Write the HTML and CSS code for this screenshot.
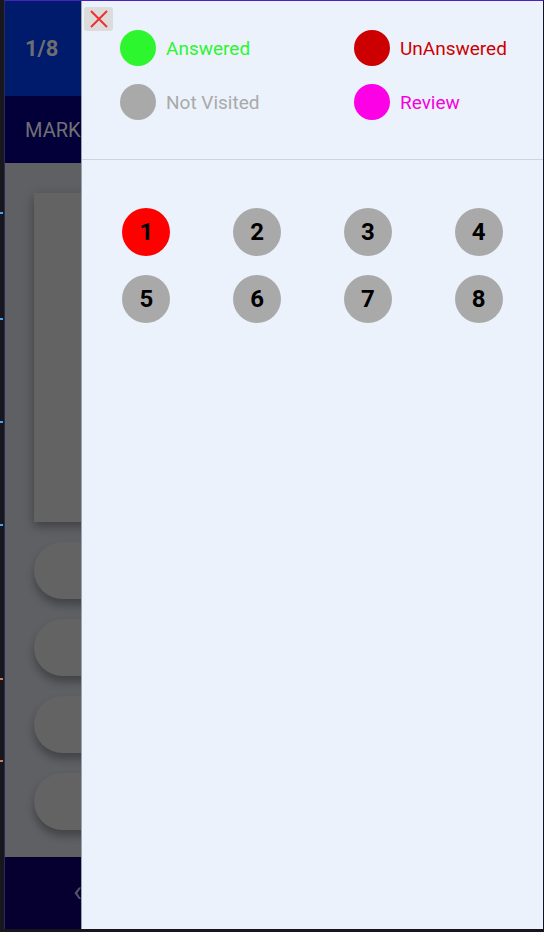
FILE: index.html
```html
<!DOCTYPE html>
<html>
<head>
<meta charset="utf-8">
<link rel="stylesheet" href="styles.css">
</head>
<body>
<div class="screen">
  <div class="gutter">
    <span class="mk m1"></span><span class="mk m2"></span><span class="mk m3"></span>
    <span class="mk m4"></span><span class="mk m5"></span><span class="mk m6"></span>
  </div>
  <div class="frame">
    <div class="app">
      <div class="hdr"><span class="count">1/8</span></div>
      <div class="subhdr"><span class="mark">MARK FOR REVIEW</span></div>
      <div class="content">
        <div class="card"></div>
        <div class="pill"></div>
        <div class="pill"></div>
        <div class="pill"></div>
        <div class="pill"></div>
      </div>
      <div class="footer"><span class="chev">&#8249;</span></div>

      <aside class="drawer">
        <button class="close" aria-label="close">
          <svg width="20" height="18" viewBox="0 0 20 18"><path d="M2 1 L18 17 M18 1 L2 17" stroke="#f0302f" stroke-width="2" fill="none"/></svg>
        </button>
        <div class="legend">
          <div class="item"><span class="dot green"></span><span class="lbl t-green">Answered</span></div>
          <div class="item"><span class="dot red"></span><span class="lbl t-red">UnAnswered</span></div>
          <div class="item"><span class="dot gray"></span><span class="lbl t-gray">Not Visited</span></div>
          <div class="item"><span class="dot pink"></span><span class="lbl t-pink">Review</span></div>
        </div>
        <div class="divider"></div>
        <div class="grid">
          <div class="cell"><span class="num cur">1</span></div>
          <div class="cell"><span class="num">2</span></div>
          <div class="cell"><span class="num">3</span></div>
          <div class="cell"><span class="num">4</span></div>
          <div class="cell"><span class="num">5</span></div>
          <div class="cell"><span class="num">6</span></div>
          <div class="cell"><span class="num">7</span></div>
          <div class="cell"><span class="num">8</span></div>
        </div>
      </aside>
    </div>
  </div>
</div>
</body>
</html>
```
FILE: styles.css
```css
* { box-sizing: border-box; }
html, body { margin: 0; padding: 0; background: #16161c; }
body { font-family: Roboto, "Noto Sans", sans-serif; width: 544px; height: 932px; overflow: hidden; }

.screen { display: flex; width: 544px; height: 932px; }

.gutter { position: relative; width: 4px; background: #17171d; flex: none; }
.mk { position: absolute; left: 0; width: 3px; height: 2px; }
.m1 { top: 212px; background: #4aa3e8; }
.m2 { top: 318px; background: #4aa3e8; }
.m3 { top: 421px; background: #4aa3e8; }
.m4 { top: 524px; background: #4aa3e8; }
.m5 { top: 678px; background: #d9774f; }
.m6 { top: 760px; background: #d9774f; }

.frame {
  width: 540px;
  height: 929px;
  border-top: 1px solid #4a22c0;
  border-left: 1px solid #2a2a5c;
  border-right: 1px solid #101030;
  flex: none;
}

.app { position: relative; height: 928px; display: flex; flex-direction: column; overflow: hidden; }

.hdr { height: 95px; background: #001a6c; display: flex; align-items: center; padding-left: 20px; flex: none; }
.count { color: #6e6e72; font-weight: 700; font-size: 22px; }
.subhdr { height: 67px; background: #030039; display: flex; align-items: center; padding-left: 20px; flex: none; }
.mark { color: #707074; font-size: 20px; white-space: nowrap; }

.content { flex: 1; background: #5f6064; padding: 30px 0 0 29px; display: flex; flex-direction: column; gap: 20px; }
.card { height: 329px; background: #636363; box-shadow: 0 4px 10px rgba(0,0,0,0.35); }
.pill { height: 57px; background: #636363; border-radius: 29px 0 0 29px; box-shadow: 0 6px 8px rgba(0,0,0,0.3); }

.footer { height: 72px; background: #050030; flex: none; display: flex; align-items: center; padding-left: 68px; }
.chev { color: #55556a; font-size: 30px; line-height: 1; margin-top: -4px; }

.drawer {
  position: absolute;
  top: 0;
  left: 76px;
  width: 462px;
  height: 928px;
  background: #ecf2fc;
  border-left: 1px solid #9ca2ad;
}

.close {
  position: absolute;
  top: 6px;
  left: 2px;
  width: 29px;
  height: 24px;
  border: none;
  border-radius: 3px;
  background: #dcdcdc;
  padding: 0;
  display: flex;
  align-items: center;
  justify-content: center;
}

.legend {
  display: grid;
  grid-template-columns: 234px 1fr;
  row-gap: 18px;
  padding: 29px 0 39px 38px;
}
.item { display: flex; align-items: center; height: 36px; }
.dot { width: 36px; height: 36px; border-radius: 50%; flex: none; margin-right: 10px; }
.lbl { font-size: 19px; }
.green { background: #2df52e; }
.red { background: #cc0000; }
.gray { background: #a9a9a9; }
.pink { background: #fc00e6; }
.t-green { color: #2df52e; }
.t-red { color: #cc0000; }
.t-gray { color: #a9a9a9; }
.t-pink { color: #f500e0; }

.divider { height: 1px; background: #cfd3da; }

.grid {
  display: grid;
  grid-template-columns: repeat(4, 1fr);
  row-gap: 19px;
  padding: 48px 9px 0 9px;
}
.cell { display: flex; justify-content: center; }
.num {
  width: 48px;
  height: 48px;
  border-radius: 50%;
  background: #a9a9a9;
  color: #000;
  font-weight: 700;
  font-size: 24px;
  display: flex;
  align-items: center;
  justify-content: center;
}
.num.cur { background: #ff0000; }
```
